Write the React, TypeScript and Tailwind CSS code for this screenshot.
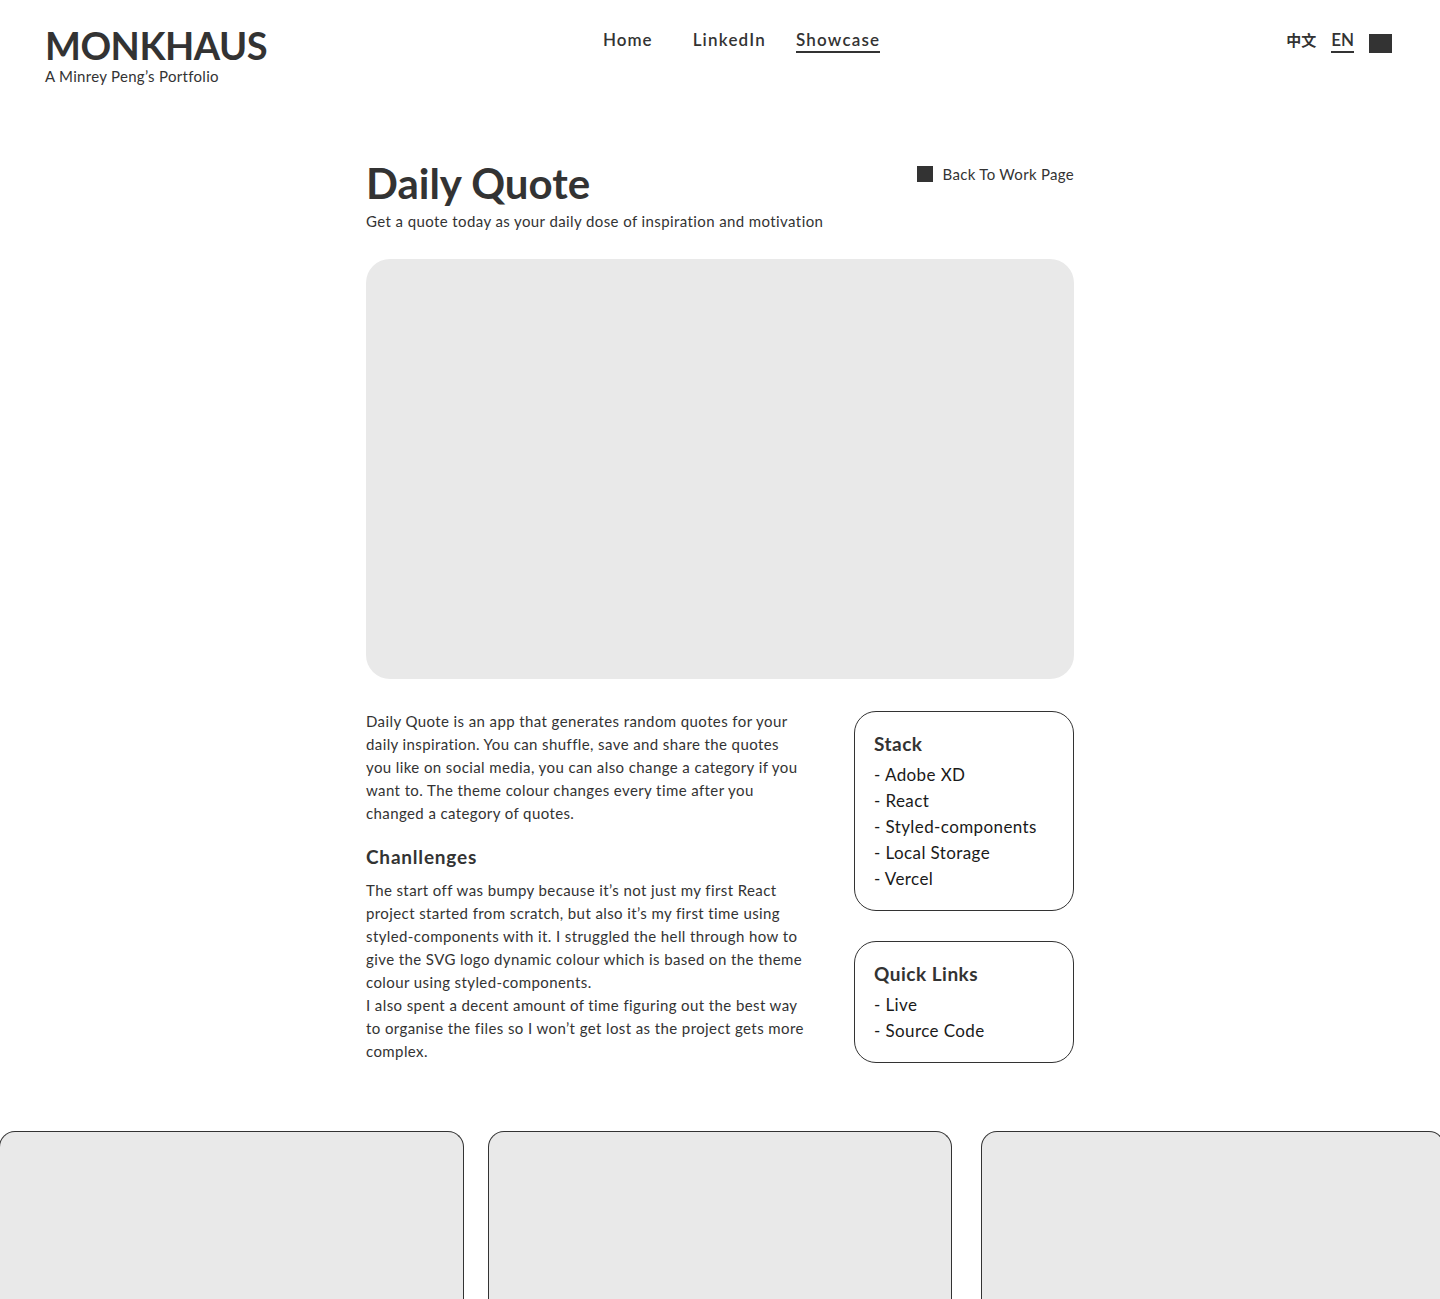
import { FC } from "react";

const stack = ["Adobe XD", "React", "Styled-components", "Local Storage", "Vercel"];
const links = ["Live", "Source Code"];

const Header: FC = () => {
  return (
    <header className="w-full flex items-start px-[45px] pt-[26px]">
      <div className="w-[558px] flex flex-col">
        <h1 className="text-[38px] leading-[38px] font-bold tracking-[-0.5px] text-[#333]">MONKHAUS</h1>
        <span className="text-[15px] leading-[18px] tracking-[0.3px] text-[#333] mt-[3px]">
          A Minrey Peng’s Portfolio
        </span>
      </div>

      <nav className="flex items-start mt-[5px]">
        <a className="text-[17px] leading-[18px] font-semibold tracking-[1px] text-[#333] pb-[2px] border-b-2 border-transparent">
          Home
        </a>
        <a className="text-[17px] leading-[18px] font-semibold tracking-[1.2px] text-[#333] pb-[2px] border-b-2 border-transparent ml-[40px]">
          LinkedIn
        </a>
        <a className="text-[17px] leading-[18px] font-semibold tracking-[1.2px] text-[#333] pb-[2px] border-b-2 border-[#333] ml-[30px]">
          Showcase
        </a>
      </nav>

      <div className="ml-auto flex items-start gap-[15px] mt-[5px] pr-[3px]">
        <span
          className="text-[15px] leading-[18px] font-bold text-[#333] pb-[2px]"
          style={{ fontFamily: "'Noto Sans CJK SC', sans-serif" }}
        >
          中文
        </span>
        <span className="text-[17px] leading-[18px] font-semibold text-[#333] border-b-2 border-[#333] pb-[2px]">
          EN
        </span>
        <span className="w-[23px] h-[19px] bg-[#333] mt-[3px]" />
      </div>
    </header>
  );
};

const InfoBox: FC<{ title: string; items: string[] }> = ({ title, items }) => {
  return (
    <div className="w-full border border-[#333] rounded-[22px] px-[19px] pt-[19px] pb-[18px]">
      <h3 className="text-[19px] font-bold tracking-[0.5px] text-[#333] leading-[26px] mb-[5px]">{title}</h3>
      <ul className="flex flex-col">
        {items.map((el) => (
          <li key={el} className="text-[17px] leading-[26px] tracking-[0.4px] text-[#1a1a1a]">
            - {el}
          </li>
        ))}
      </ul>
    </div>
  );
};

const App: FC = () => {
  return (
    <div
      className="w-full h-[1299px] overflow-hidden bg-white text-[#333]"
      style={{ fontFamily: "Lato, 'Noto Sans', sans-serif" }}
    >
      <Header />

      <main className="w-[708px] mx-auto mt-[73px]">
        <div className="w-full flex justify-between items-start">
          <div className="flex flex-col">
            <h2 className="text-[42px] leading-[50px] font-bold text-[#333]">Daily Quote</h2>
            <p className="text-[15px] leading-[20px] tracking-[0.4px] text-[#333] mt-[3px]">
              Get a quote today as your daily dose of inspiration and motivation
            </p>
          </div>
          <a className="flex items-center gap-[10px] mt-[5px] text-[15px] tracking-[0.3px] text-[#333]">
            <span className="w-[16px] h-[16px] bg-[#333]" />
            Back To Work Page
          </a>
        </div>

        <div className="w-full h-[420px] bg-[#e9e9e9] rounded-[24px] mt-[28px]" />

        <div className="w-full grid grid-cols-[440px_220px] justify-between mt-[32px]">
          <div className="flex flex-col text-[15px] leading-[23px] tracking-[0.4px] text-[#333]">
            <p className="-mt-[1px]">
              Daily Quote is an app that generates random quotes for your daily inspiration. You can shuffle, save
              and share the quotes you like on social media, you can also change a category if you want to. The theme
              colour changes every time after you changed a category of quotes.
            </p>
            <h3 className="text-[19px] font-bold leading-[26px] tracking-[0.8px] mt-[19px] mb-[9px]">Chanllenges</h3>
            <p>
              The start off was bumpy because it’s not just my first React project started from scratch, but also
              it’s my first time using styled-components with it. I struggled the hell through how to give the SVG
              logo dynamic colour which is based on the theme colour using styled-components.
            </p>
            <p>
              I also spent a decent amount of time figuring out the best way to organise the files so I won’t get
              lost as the project gets more complex.
            </p>
          </div>

          <div className="flex flex-col gap-[30px]">
            <InfoBox {...{ title: "Stack", items: stack }} />
            <InfoBox {...{ title: "Quick Links", items: links }} />
          </div>
        </div>
      </main>

      <div className="w-full flex gap-[24px] mt-[68px] -ml-[1px]">
        <div className="w-[465px] h-[200px] shrink-0 bg-[#e9e9e9] border border-[#333] border-b-0 rounded-t-[16px]" />
        <div className="w-[464px] h-[200px] shrink-0 bg-[#e9e9e9] border border-[#333] border-b-0 rounded-t-[16px]" />
        <div className="w-[464px] h-[200px] shrink-0 bg-[#e9e9e9] border border-[#333] border-b-0 rounded-t-[16px] ml-[5px]" />
      </div>
    </div>
  );
};

export default App;
